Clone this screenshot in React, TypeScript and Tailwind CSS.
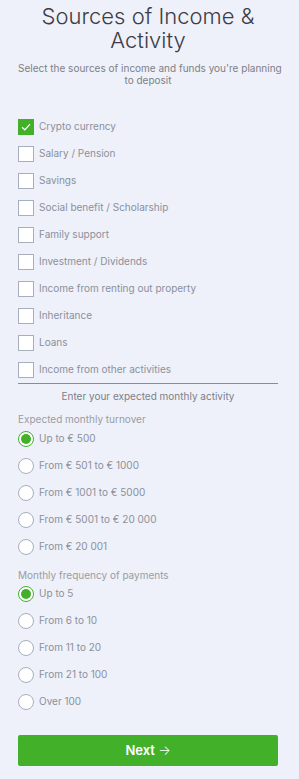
import { useState } from 'react';

const sources = [
    'Crypto currency',
    'Salary / Pension',
    'Savings',
    'Social benefit / Scholarship',
    'Family support',
    'Investment / Dividends',
    'Income from renting out property',
    'Inheritance',
    'Loans',
    'Income from other activities',
];

const turnover = [
    'Up to € 500',
    'From € 501 to € 1000',
    'From € 1001 to € 5000',
    'From € 5001 to € 20 000',
    'From € 20 001',
];

const frequency = ['Up to 5', 'From 6 to 10', 'From 11 to 20', 'From 21 to 100', 'Over 100'];

function Checkbox({ label, checked, onToggle }: { label: string; checked: boolean; onToggle: () => void }) {
    return (
        <label className="flex items-center gap-[5px] h-[27px] cursor-pointer" onClick={onToggle}>
            {checked ? (
                <span className="w-4 h-4 bg-[#43b02a] flex items-center justify-center shrink-0">
                    <svg width="10" height="8" viewBox="0 0 10 8" fill="none">
                        <path d="M1 4.2 L3.8 6.8 L9 1.2" stroke="white" strokeWidth="1.2" />
                    </svg>
                </span>
            ) : (
                <span className="w-4 h-4 bg-white border border-[#a7afbf] shrink-0" />
            )}
            <span className="text-[10px] text-[#8b909c]">{label}</span>
        </label>
    );
}

function Radio({ label, checked, onSelect }: { label: string; checked: boolean; onSelect: () => void }) {
    return (
        <label className="flex items-center gap-[5px] h-[27px] cursor-pointer" onClick={onSelect}>
            {checked ? (
                <span className="w-4 h-4 rounded-full bg-white border-[1.5px] border-[#43b02a] flex items-center justify-center shrink-0">
                    <span className="w-[10px] h-[10px] rounded-full bg-[#43b02a]" />
                </span>
            ) : (
                <span className="w-4 h-4 rounded-full bg-white border border-[#a7afbf] shrink-0" />
            )}
            <span className="text-[10px] text-[#8b909c]">{label}</span>
        </label>
    );
}

export default function App() {
    const [picked, setPicked] = useState<string[]>(['Crypto currency']);
    const [turn, setTurn] = useState(turnover[0]);
    const [freq, setFreq] = useState(frequency[0]);

    const toggle = (s: string) =>
        setPicked((p) => (p.includes(s) ? p.filter((x) => x !== s) : [...p, s]));

    return (
        <div className="min-h-screen bg-[#eef1f9] pl-[18px] pr-[21px] pb-4" style={{ fontFamily: 'Inter, "Noto Sans", sans-serif' }}>
            <h1 className="text-center text-[22px] leading-[24px] font-light text-[#3d3d46] pt-[4px]">
                Sources of Income &amp;<br />Activity
            </h1>
            <p className="text-center text-[10px] leading-[12px] text-[#7d7f88] mt-[10px] whitespace-nowrap">
                Select the sources of income and funds you're planning<br />to deposit
            </p>

            <div className="mt-[27px] flex flex-col">
                {sources.map((s) => (
                    <Checkbox key={s} label={s} checked={picked.includes(s)} onToggle={() => toggle(s)} />
                ))}
            </div>

            <div className="border-t border-[#8a8d96]" />
            <p className="text-center text-[10px] text-[#7d7f88] mt-[5px]">Enter your expected monthly activity</p>

            <p className="text-[10px] text-[#9a9ca4] mt-[8px]">Expected monthly turnover</p>
            <div className="flex flex-col mt-[-2px]">
                {turnover.map((t) => (
                    <Radio key={t} label={t} checked={turn === t} onSelect={() => setTurn(t)} />
                ))}
            </div>

            <p className="text-[10px] text-[#9a9ca4] mt-[8px]">Monthly frequency of payments</p>
            <div className="flex flex-col mt-[-3px]">
                {frequency.map((f) => (
                    <Radio key={f} label={f} checked={freq === f} onSelect={() => setFreq(f)} />
                ))}
            </div>

            <button className="mt-[20px] w-full h-[31px] bg-[#43b02a] rounded-[2px] text-white text-[13px] font-semibold">
                Next <span className="font-light">→</span>
            </button>
        </div>
    );
}
